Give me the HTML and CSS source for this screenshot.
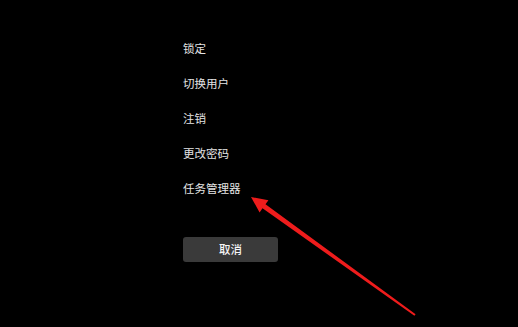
FILE: index.html
```html
<!DOCTYPE html>
<html lang="zh-CN">
<head>
<meta charset="utf-8">
<link rel="stylesheet" href="styles.css">
</head>
<body>
<main class="screen">
  <ul class="menu">
    <li class="item">锁定</li>
    <li class="item">切换用户</li>
    <li class="item">注销</li>
    <li class="item">更改密码</li>
    <li class="item">任务管理器</li>
  </ul>
  <button class="cancel">取消</button>
  <svg class="arrow" width="518" height="327" viewBox="0 0 518 327">
    <polygon points="251,197 259.6,212.4 262.5,208.3 414.4,315.8 415.6,314.2 265.5,204.3 268.4,200.2" fill="#ee1c1c"/>
  </svg>
</main>
</body>
</html>
```

FILE: styles.css
```css
html, body {
  margin: 0;
  padding: 0;
  background: #000;
}
.screen {
  position: relative;
  width: 518px;
  height: 327px;
  overflow: hidden;
  padding: 31px 0 0 183px;
  box-sizing: border-box;
  font-family: "Noto Sans CJK SC", "Noto Sans", sans-serif;
}
.menu {
  list-style: none;
  margin: 0;
  padding: 0;
  display: flex;
  flex-direction: column;
}
.item {
  height: 35px;
  line-height: 35px;
  font-size: 11.5px;
  color: #e4e4e4;
}
.cancel {
  display: block;
  margin-top: 31px;
  width: 95px;
  height: 25px;
  padding: 0;
  border: none;
  border-radius: 3px;
  background: #3a3a3a;
  color: #f5f5f5;
  font-family: "Noto Sans CJK SC", "Noto Sans", sans-serif;
  font-size: 11.5px;
  font-weight: 500;
  line-height: 25px;
}
.arrow {
  position: absolute;
  left: 0;
  top: 0;
}
```
